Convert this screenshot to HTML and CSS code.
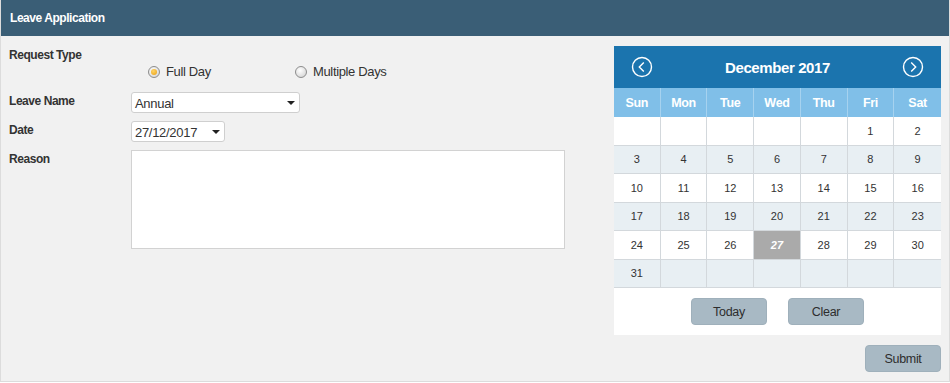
FILE: index.html
```html
<!DOCTYPE html>
<html lang="en">
<head>
    <meta charset="UTF-8">
    <meta name="viewport" content="width=device-width, initial-scale=1.0">
    <title>Leave Application</title>
    <link rel="stylesheet" href="styles.css">
</head>
<body>
    <div class="panel">
        <div class="panel-header">Leave Application</div>

        <div class="panel-body">
            <form class="leave-form">
                <div class="row row-type">
                    <label class="field-label">Request Type</label>
                    <div class="radios">
                        <span class="radio-item"><span class="radio checked"></span>Full Day</span>
                        <span class="radio-item"><span class="radio"></span>Multiple Days</span>
                    </div>
                </div>

                <div class="row">
                    <label class="field-label">Leave Name</label>
                    <div class="select select-wide">Annual<span class="caret"></span></div>
                </div>

                <div class="row">
                    <label class="field-label">Date</label>
                    <div class="select select-date">27/12/2017<span class="caret"></span></div>
                </div>

                <div class="row">
                    <label class="field-label">Reason</label>
                    <div class="textarea"></div>
                </div>
            </form>

            <div class="side">
                <div class="calendar">
                    <div class="cal-head">
                        <svg class="nav" width="22" height="22" viewBox="0 0 22 22">
                            <circle cx="11" cy="11" r="9.5" fill="none" stroke="#fff" stroke-width="1.4"/>
                            <path d="M12.8 6.5 L8.3 11 L12.8 15.5" fill="none" stroke="#fff" stroke-width="1.4"/>
                        </svg>
                        <span class="cal-title">December 2017</span>
                        <svg class="nav" width="22" height="22" viewBox="0 0 22 22">
                            <circle cx="11" cy="11" r="9.5" fill="none" stroke="#fff" stroke-width="1.4"/>
                            <path d="M9.2 6.5 L13.7 11 L9.2 15.5" fill="none" stroke="#fff" stroke-width="1.4"/>
                        </svg>
                    </div>
                    <div class="week-names">
                        <span>Sun</span><span>Mon</span><span>Tue</span><span>Wed</span><span>Thu</span><span>Fri</span><span>Sat</span>
                    </div>
                    <div class="weeks">
                        <div class="week"><span></span><span></span><span></span><span></span><span></span><span>1</span><span>2</span></div>
                        <div class="week"><span>3</span><span>4</span><span>5</span><span>6</span><span>7</span><span>8</span><span>9</span></div>
                        <div class="week"><span>10</span><span>11</span><span>12</span><span>13</span><span>14</span><span>15</span><span>16</span></div>
                        <div class="week"><span>17</span><span>18</span><span>19</span><span>20</span><span>21</span><span>22</span><span>23</span></div>
                        <div class="week"><span>24</span><span>25</span><span>26</span><span class="selected">27</span><span>28</span><span>29</span><span>30</span></div>
                        <div class="week"><span>31</span><span></span><span></span><span></span><span></span><span></span><span></span></div>
                    </div>
                    <div class="cal-foot">
                        <button type="button" class="btn">Today</button>
                        <button type="button" class="btn">Clear</button>
                    </div>
                </div>
                <button type="button" class="btn btn-submit">Submit</button>
            </div>
        </div>
    </div>
</body>
</html>
```

FILE: styles.css
```css
body {
    margin: 0;
    font-family: "Liberation Sans", Arial, sans-serif;
    font-size: 12px;
    color: #333;
    background-color: #fff;
}

.panel {
    height: 382px;
    border: 1px solid #dcdcdc;
    border-top: none;
    background-color: #f1f1f1;
    box-sizing: border-box;
}

.panel-header {
    height: 36px;
    line-height: 36px;
    padding-left: 9px;
    background-color: #3a5e76;
    color: #fff;
    font-weight: bold;
    font-size: 12px;
    letter-spacing: -0.45px;
}

.panel-body {
    display: flex;
    justify-content: space-between;
    padding: 10px 8px 0 8px;
}

/* form */
.leave-form {
    width: 560px;
}

.row {
    display: flex;
    margin-bottom: 8px;
}

.field-label {
    width: 122px;
    flex-shrink: 0;
    font-weight: bold;
    line-height: 16px;
    padding-top: 1px;
    letter-spacing: -0.45px;
}

.row-type {
    height: 38px;
    margin-bottom: 8px;
}

.radios {
    display: flex;
    padding-top: 13px;
    padding-left: 17px;
}

.radio-item {
    display: flex;
    align-items: center;
    width: 147px;
    font-size: 13px;
    line-height: 16px;
    letter-spacing: -0.35px;
}

.radio {
    display: inline-block;
    width: 10px;
    height: 10px;
    border: 1px solid #8d8d8d;
    border-radius: 50%;
    margin-right: 6px;
    background: radial-gradient(circle at 40% 35%, #fff 0%, #dcdcdc 70%, #c4c4c4 100%);
    position: relative;
}

.radio.checked::after {
    content: "";
    position: absolute;
    left: 2px;
    top: 2px;
    width: 6px;
    height: 6px;
    border-radius: 50%;
    background: radial-gradient(circle at 40% 35%, #ffd466, #e79e12);
}

.select {
    position: relative;
    height: 21px;
    line-height: 21px;
    padding-left: 3px;
    border: 1px solid #cfcfcf;
    border-radius: 3px;
    background-color: #fff;
    box-sizing: border-box;
    font-size: 13px;
    letter-spacing: -0.3px;
}

.select-wide {
    width: 169px;
}

.select-date {
    width: 94px;
}

.caret {
    position: absolute;
    right: 4px;
    top: 8px;
    border-left: 4px solid transparent;
    border-right: 4px solid transparent;
    border-top: 4px solid #222;
}

.textarea {
    width: 434px;
    height: 99px;
    border: 1px solid #d2d2d2;
    background-color: #fff;
    box-sizing: border-box;
}

/* calendar */
.side {
    width: 327px;
    display: flex;
    flex-direction: column;
    align-items: flex-end;
}

.calendar {
    width: 327px;
    background-color: #fff;
}

.cal-head {
    height: 42px;
    display: flex;
    align-items: center;
    justify-content: space-between;
    padding: 0 17px;
    background-color: #1b74ae;
    color: #fff;
}

.cal-title {
    font-weight: bold;
    font-size: 15px;
    letter-spacing: -0.4px;
}

.week-names,
.week {
    display: grid;
    grid-template-columns: repeat(7, 1fr);
}

.week-names {
    height: 29px;
    background-color: #80bfe8;
    color: #fff;
    font-weight: bold;
    font-size: 12.5px;
    letter-spacing: -0.3px;
}

.week-names span {
    display: flex;
    align-items: center;
    justify-content: center;
    border-right: 1px solid #a6d2ef;
}

.week-names span:last-child,
.week span:last-child {
    border-right: none;
}

.week {
    height: 28.5px;
    font-size: 11px;
}

.week:nth-child(even) {
    background-color: #e8eff3;
}

.week span {
    display: flex;
    align-items: center;
    justify-content: center;
    border-right: 1px solid #d3d8dc;
    border-bottom: 1px solid #d3d8dc;
}

.week span.selected {
    background-color: #aaa;
    color: #fff;
    font-weight: bold;
    font-style: italic;
}

.cal-foot {
    height: 47px;
    display: flex;
    justify-content: center;
    align-items: center;
    gap: 21px;
}

.btn {
    width: 76px;
    height: 27px;
    border: 1px solid #9fb0bb;
    border-radius: 4px;
    background-color: #a8b9c4;
    color: #2d2d2d;
    font-family: inherit;
    font-size: 12.5px;
    letter-spacing: -0.3px;
    cursor: pointer;
}

.btn-submit {
    margin-top: 10px;
}
```
